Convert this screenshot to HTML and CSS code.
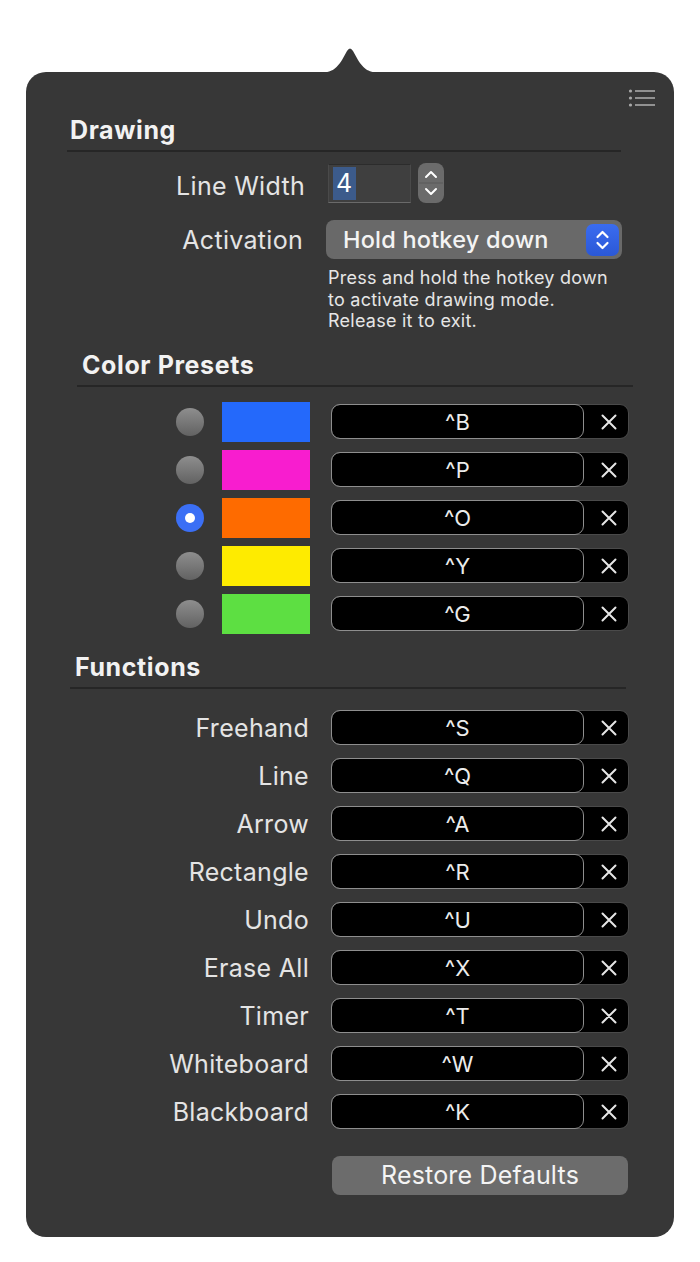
FILE: index.html
```html
<!DOCTYPE html>
<html>
<head>
<meta charset="utf-8">
<link rel="stylesheet" href="styles.css">
</head>
<body>
<div class="stage">
  <div class="panel">
    <svg class="arrow" width="66" height="27" viewBox="0 0 66 27"><path d="M0 27 C 15 27, 19 23, 25 14 L 30 5 Q 33 0 36 5 L 41 14 C 47 23, 51 27, 66 27 Z" fill="#373737"/></svg>
    <div class="topbar">
      <svg class="menu" width="28" height="20" viewBox="0 0 28 20">
        <circle cx="2.5" cy="3" r="1.6" fill="#a9a9a9"/>
        <circle cx="2.5" cy="10" r="1.6" fill="#a9a9a9"/>
        <circle cx="2.5" cy="17" r="1.6" fill="#a9a9a9"/>
        <rect x="7" y="2.2" width="20" height="1.6" fill="#a9a9a9"/>
        <rect x="7" y="9.2" width="20" height="1.6" fill="#a9a9a9"/>
        <rect x="7" y="16.2" width="20" height="1.6" fill="#a9a9a9"/>
      </svg>
    </div>

    <div class="section sec-drawing"><h2>Drawing</h2></div>

    <div class="frow row-lw">
      <div class="flabel lw">Line Width</div>
      <div class="lw-field"><span class="sel">4</span></div>
      <div class="stepper">
        <svg width="26" height="40" viewBox="0 0 26 40">
          <path d="M8 14 L13 9 L18 14" fill="none" stroke="#fff" stroke-width="2" stroke-linecap="round" stroke-linejoin="round"/>
          <line x1="1" y1="20" x2="25" y2="20" stroke="#5a5a5a" stroke-width="1"/>
          <path d="M8 26 L13 31 L18 26" fill="none" stroke="#fff" stroke-width="2" stroke-linecap="round" stroke-linejoin="round"/>
        </svg>
      </div>
    </div>

    <div class="frow row-act">
      <div class="flabel act">Activation</div>
      <div class="popup">
        <span>Hold hotkey down</span>
        <div class="popbtn">
          <svg width="33" height="32" viewBox="0 0 33 32">
            <path d="M11.5 13 L16.5 8 L21.5 13" fill="none" stroke="#fff" stroke-width="2.2" stroke-linecap="round" stroke-linejoin="round"/>
            <path d="M11.5 19 L16.5 24 L21.5 19" fill="none" stroke="#fff" stroke-width="2.2" stroke-linecap="round" stroke-linejoin="round"/>
          </svg>
        </div>
      </div>
    </div>
    <p class="desc">Press and hold the hotkey down<br>to activate drawing mode.<br>Release it to exit.</p>

    <div class="section sec-colors"><h2>Color Presets</h2></div>

    <div class="colors">
      <div class="crow"><span class="radio"></span><span class="swatch" style="background:#2469fb"></span><div class="hk"><div class="field">^B</div><div class="x"><svg width="18" height="18" viewBox="0 0 18 18"><path d="M2.5 2.5 L15.5 15.5 M15.5 2.5 L2.5 15.5" stroke="#e6e6e6" stroke-width="2" stroke-linecap="round"/></svg></div></div></div>
      <div class="crow"><span class="radio"></span><span class="swatch" style="background:#f81dcf"></span><div class="hk"><div class="field">^P</div><div class="x"><svg width="18" height="18" viewBox="0 0 18 18"><path d="M2.5 2.5 L15.5 15.5 M15.5 2.5 L2.5 15.5" stroke="#e6e6e6" stroke-width="2" stroke-linecap="round"/></svg></div></div></div>
      <div class="crow"><span class="radio on"></span><span class="swatch" style="background:#fe6b00"></span><div class="hk"><div class="field">^O</div><div class="x"><svg width="18" height="18" viewBox="0 0 18 18"><path d="M2.5 2.5 L15.5 15.5 M15.5 2.5 L2.5 15.5" stroke="#e6e6e6" stroke-width="2" stroke-linecap="round"/></svg></div></div></div>
      <div class="crow"><span class="radio"></span><span class="swatch" style="background:#feeb00"></span><div class="hk"><div class="field">^Y</div><div class="x"><svg width="18" height="18" viewBox="0 0 18 18"><path d="M2.5 2.5 L15.5 15.5 M15.5 2.5 L2.5 15.5" stroke="#e6e6e6" stroke-width="2" stroke-linecap="round"/></svg></div></div></div>
      <div class="crow"><span class="radio"></span><span class="swatch" style="background:#5ddf42"></span><div class="hk"><div class="field">^G</div><div class="x"><svg width="18" height="18" viewBox="0 0 18 18"><path d="M2.5 2.5 L15.5 15.5 M15.5 2.5 L2.5 15.5" stroke="#e6e6e6" stroke-width="2" stroke-linecap="round"/></svg></div></div></div>
    </div>

    <div class="section sec-funcs"><h2>Functions</h2></div>

    <div class="funcs">
      <div class="furow"><div class="fulabel">Freehand</div><div class="hk"><div class="field">^S</div><div class="x"><svg width="18" height="18" viewBox="0 0 18 18"><path d="M2.5 2.5 L15.5 15.5 M15.5 2.5 L2.5 15.5" stroke="#e6e6e6" stroke-width="2" stroke-linecap="round"/></svg></div></div></div>
      <div class="furow"><div class="fulabel">Line</div><div class="hk"><div class="field">^Q</div><div class="x"><svg width="18" height="18" viewBox="0 0 18 18"><path d="M2.5 2.5 L15.5 15.5 M15.5 2.5 L2.5 15.5" stroke="#e6e6e6" stroke-width="2" stroke-linecap="round"/></svg></div></div></div>
      <div class="furow"><div class="fulabel">Arrow</div><div class="hk"><div class="field">^A</div><div class="x"><svg width="18" height="18" viewBox="0 0 18 18"><path d="M2.5 2.5 L15.5 15.5 M15.5 2.5 L2.5 15.5" stroke="#e6e6e6" stroke-width="2" stroke-linecap="round"/></svg></div></div></div>
      <div class="furow"><div class="fulabel">Rectangle</div><div class="hk"><div class="field">^R</div><div class="x"><svg width="18" height="18" viewBox="0 0 18 18"><path d="M2.5 2.5 L15.5 15.5 M15.5 2.5 L2.5 15.5" stroke="#e6e6e6" stroke-width="2" stroke-linecap="round"/></svg></div></div></div>
      <div class="furow"><div class="fulabel">Undo</div><div class="hk"><div class="field">^U</div><div class="x"><svg width="18" height="18" viewBox="0 0 18 18"><path d="M2.5 2.5 L15.5 15.5 M15.5 2.5 L2.5 15.5" stroke="#e6e6e6" stroke-width="2" stroke-linecap="round"/></svg></div></div></div>
      <div class="furow"><div class="fulabel">Erase All</div><div class="hk"><div class="field">^X</div><div class="x"><svg width="18" height="18" viewBox="0 0 18 18"><path d="M2.5 2.5 L15.5 15.5 M15.5 2.5 L2.5 15.5" stroke="#e6e6e6" stroke-width="2" stroke-linecap="round"/></svg></div></div></div>
      <div class="furow"><div class="fulabel">Timer</div><div class="hk"><div class="field">^T</div><div class="x"><svg width="18" height="18" viewBox="0 0 18 18"><path d="M2.5 2.5 L15.5 15.5 M15.5 2.5 L2.5 15.5" stroke="#e6e6e6" stroke-width="2" stroke-linecap="round"/></svg></div></div></div>
      <div class="furow"><div class="fulabel">Whiteboard</div><div class="hk"><div class="field">^W</div><div class="x"><svg width="18" height="18" viewBox="0 0 18 18"><path d="M2.5 2.5 L15.5 15.5 M15.5 2.5 L2.5 15.5" stroke="#e6e6e6" stroke-width="2" stroke-linecap="round"/></svg></div></div></div>
      <div class="furow"><div class="fulabel">Blackboard</div><div class="hk"><div class="field">^K</div><div class="x"><svg width="18" height="18" viewBox="0 0 18 18"><path d="M2.5 2.5 L15.5 15.5 M15.5 2.5 L2.5 15.5" stroke="#e6e6e6" stroke-width="2" stroke-linecap="round"/></svg></div></div></div>
    </div>

    <div class="restore-wrap"><button class="restore">Restore Defaults</button></div>
  </div>
</div>
</body>
</html>
```

FILE: styles.css
```css
html, body {
  margin: 0;
  padding: 0;
  background: #ffffff;
}
body {
  font-family: Inter, "Noto Sans", "Liberation Sans", sans-serif;
  color: #e4e4e4;
}
.stage {
  padding-top: 72px;
  height: 1190px;
}
.panel {
  position: relative;
  margin-left: 26px;
  width: 648px;
  background: #373737;
  border-radius: 20px;
  padding-bottom: 42px;
}
.arrow {
  position: absolute;
  left: 291px;
  top: -26px;
}
.topbar {
  height: 44px;
  display: flex;
  justify-content: flex-end;
  align-items: flex-start;
  padding-right: 18px;
  box-sizing: border-box;
  padding-top: 16px;
}
.section {
  border-bottom: 2px solid #262626;
  padding-bottom: 6px;
}
.section h2 {
  margin: 0;
  font-size: 25px;
  line-height: 28px;
  font-weight: 700;
  color: #f2f2f2;
  letter-spacing: 0.6px;
}
.sec-drawing {
  margin-left: 41px;
  width: 554px;
}
.sec-drawing h2 { padding-left: 3px; }
.sec-colors {
  margin-left: 51px;
  width: 556px;
  margin-top: 19px;
}
.sec-colors h2 { padding-left: 5px; }
.sec-funcs {
  margin-left: 44px;
  width: 556px;
  margin-top: 15px;
}
.sec-funcs h2 { padding-left: 5px; }

.frow {
  display: flex;
  align-items: center;
  height: 40px;
}
.row-lw { margin-top: 11px; }
.row-act { margin-top: 17px; height: 39px; }
.flabel {
  width: 279px;
  text-align: right;
  font-size: 25px;
  letter-spacing: 0.3px;
  color: #e4e4e4;
  margin-right: 23px;
}
.flabel.lw { padding-top: 6px; }
.flabel.act { width: 277px; margin-right: 23px; }
.lw-field {
  width: 83px;
  height: 39px;
  box-sizing: border-box;
  background: #3f3f3f;
  border: 1px solid #4a4a4a;
  border-top-color: #2c2c2c;
  border-bottom: 1.5px solid #6a6a6a;
  display: flex;
  align-items: center;
  padding-left: 4px;
}
.sel {
  background: #3c5b8b;
  color: #ffffff;
  font-size: 25px;
  line-height: 33px;
  padding: 0 4px 0 3px;
}
.stepper {
  margin-left: 7px;
  width: 26px;
  height: 40px;
  border-radius: 8px;
  background: #6b6b6b;
  display: flex;
}
.popup {
  width: 296px;
  height: 39px;
  border-radius: 8px;
  background: #696969;
  display: flex;
  align-items: center;
  justify-content: space-between;
  padding-left: 17px;
  padding-right: 3px;
  box-sizing: border-box;
  font-size: 23.5px;
  letter-spacing: 0.2px;
  color: #f4f4f4;
  font-weight: 500;
}
.popbtn {
  width: 33px;
  height: 32px;
  border-radius: 7px;
  background: linear-gradient(#3a6cf0, #2b58d6);
  display: flex;
}
.desc {
  margin: 8px 0 0 302px;
  font-size: 18px;
  letter-spacing: 0.25px;
  line-height: 21.5px;
  color: #e6e6e6;
}

.colors { margin-top: 11px; }
.crow {
  display: flex;
  align-items: center;
  height: 48px;
  padding-left: 150px;
}
.radio {
  width: 28px;
  height: 28px;
  border-radius: 50%;
  background: linear-gradient(#8e8e8e, #626262);
  box-sizing: border-box;
  margin-right: 18px;
  flex: none;
}
.radio.on {
  background: #3b6ff5;
  position: relative;
}
.radio.on::after {
  content: "";
  position: absolute;
  left: 9px;
  top: 9px;
  width: 10px;
  height: 10px;
  border-radius: 50%;
  background: #ffffff;
}
.swatch {
  width: 88px;
  height: 40px;
  margin-right: 21px;
  flex: none;
}
.hk {
  width: 298px;
  height: 35px;
  box-sizing: border-box;
  background: #000000;
  border: 1px solid #4a4a4a;
  border-radius: 9px;
  display: flex;
  flex: none;
}
.field {
  width: 253px;
  margin: -1px 0 -1px -1px;
  box-sizing: border-box;
  border: 1.5px solid #8e8e8e;
  border-radius: 9px;
  display: flex;
  align-items: center;
  justify-content: center;
  font-size: 22px;
  color: #ececec;
}
.x {
  flex: 1;
  display: flex;
  align-items: center;
  justify-content: center;
  padding-left: 6px;
}

.funcs { margin-top: 15px; }
.furow {
  display: flex;
  align-items: center;
  height: 48px;
}
.fulabel {
  width: 283px;
  text-align: right;
  margin-right: 22px;
  font-size: 25px;
  letter-spacing: 0.3px;
  color: #e4e4e4;
}
.restore-wrap {
  margin-top: 20px;
  padding-left: 306px;
}
.restore {
  width: 296px;
  height: 39px;
  border: none;
  border-radius: 8px;
  background: #6c6c6c;
  color: #f4f4f4;
  font-family: Inter, "Noto Sans", "Liberation Sans", sans-serif;
  font-size: 25px;
  letter-spacing: 0.2px;
  font-weight: 400;
  padding: 0;
}
```
